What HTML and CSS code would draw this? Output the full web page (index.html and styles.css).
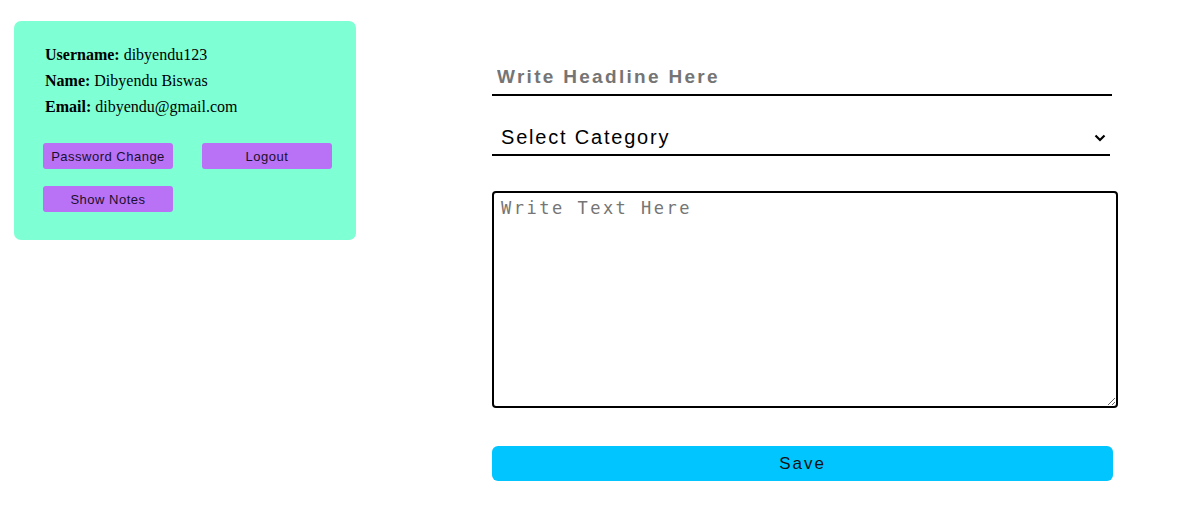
FILE: index.html
```html
<!DOCTYPE html>
<html>
<head>
<meta charset="utf-8">
<link rel="stylesheet" href="styles.css">
</head>
<body>
<div class="page">
  <aside class="card">
    <div class="info">
      <div class="line"><b>Username:</b> dibyendu123</div>
      <div class="line"><b>Name:</b> Dibyendu Biswas</div>
      <div class="line"><b>Email:</b> dibyendu@gmail.com</div>
    </div>
    <div class="actions">
      <button class="pbtn">Password Change</button>
      <button class="pbtn">Logout</button>
      <button class="pbtn">Show Notes</button>
    </div>
  </aside>
  <form class="editor">
    <input class="headline" type="text" placeholder="Write Headline Here">
    <div class="select-wrap">
      <select class="category">
        <option>Select Category</option>
      </select>
      <svg class="chev" width="12" height="8" viewBox="0 0 12 8"><path d="M1.5 1.5 L6 6 L10.5 1.5" fill="none" stroke="#000" stroke-width="2.2"/></svg>
    </div>
    <textarea class="body" placeholder="Write Text Here"></textarea>
    <button type="button" class="save">Save</button>
  </form>
</div>
</body>
</html>
```
FILE: styles.css
```css
html, body {
  margin: 0;
  padding: 0;
  background: #fff;
}
.page {
  display: flex;
  align-items: flex-start;
  padding: 21px 14px;
}
.card {
  box-sizing: border-box;
  width: 342px;
  height: 219px;
  background: #7fffd4;
  border-radius: 7px;
  padding: 21px 24px 0 31px;
}
.info {
  font-family: "Liberation Serif", "Times New Roman", serif;
  font-size: 16px;
  line-height: 26px;
  color: #000;
}
.actions {
  margin-top: 23px;
  margin-left: -2px;
  display: grid;
  grid-template-columns: 130px 130px;
  column-gap: 29px;
  row-gap: 17px;
}
.pbtn {
  height: 26px;
  border: none;
  border-radius: 3px;
  background: #b972f5;
  color: #1a0f2e;
  font-family: "Liberation Sans", Arial, sans-serif;
  font-size: 13px;
  letter-spacing: 0.5px;
  padding: 0;
}
.editor {
  margin-left: 136px;
  margin-top: 39px;
  display: flex;
  flex-direction: column;
  width: 626px;
}
.headline {
  box-sizing: border-box;
  width: 620px;
  height: 36px;
  border: none;
  border-bottom: 2px solid #000;
  outline: none;
  padding: 0 5px;
  font-family: "Liberation Sans", Arial, sans-serif;
  font-size: 19px;
  font-weight: bold;
  letter-spacing: 2.3px;
  color: #000;
}
.headline::placeholder {
  color: #757575;
}
.select-wrap {
  position: relative;
  margin-top: 24px;
  width: 618px;
}
.category {
  box-sizing: border-box;
  width: 618px;
  height: 36px;
  border: none;
  border-bottom: 2px solid #000;
  border-radius: 0;
  background: #fff;
  -webkit-appearance: none;
  appearance: none;
  outline: none;
  padding: 0 9px;
  font-family: "Liberation Sans", Arial, sans-serif;
  font-size: 20px;
  letter-spacing: 1.8px;
  color: #000;
}
.chev {
  position: absolute;
  right: 4px;
  top: 14px;
}
.body {
  box-sizing: border-box;
  margin-top: 35px;
  width: 626px;
  height: 217px;
  border: 2px solid #000;
  border-radius: 4px;
  padding: 5px 7px;
  font-family: "DejaVu Sans Mono", "Liberation Mono", monospace;
  font-size: 17px;
  letter-spacing: 2.5px;
  outline: none;
}
.body::placeholder {
  color: #757575;
}
.save {
  margin-top: 38px;
  width: 621px;
  height: 35px;
  border: none;
  border-radius: 6px;
  background: #00c5ff;
  color: #111;
  font-family: "Liberation Sans", Arial, sans-serif;
  font-size: 17px;
  letter-spacing: 2px;
  padding: 0;
}
```
